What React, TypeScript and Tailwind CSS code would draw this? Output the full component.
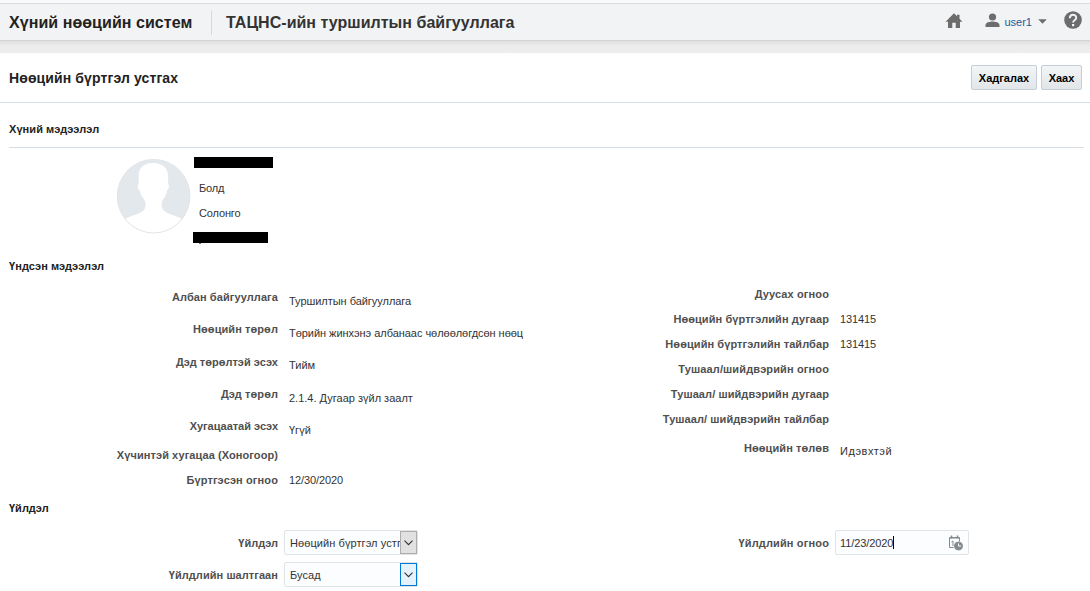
import React from 'react';

type Field = { label: string; value?: string; h: string; labelTrack?: string; valueTrack?: string; drop?: string };

const leftFields: Field[] = [
  { label: 'Албан байгууллага', value: 'Туршилтын байгууллага', h: 'h-8', drop: 'top-1', labelTrack: 'tracking-[0.09px]', valueTrack: 'tracking-[-0.04px]' },
  { label: 'Нөөцийн төрөл', value: 'Төрийн жинхэнэ албанаас чөлөөлөгдсөн нөөц', h: 'h-8', drop: 'top-1', valueTrack: 'tracking-[-0.04px]' },
  { label: 'Дэд төрөлтэй эсэх', value: 'Тийм', h: 'h-[33px]', drop: 'top-[3px]', labelTrack: 'tracking-[0.02px]' },
  { label: 'Дэд төрөл', value: '2.1.4. Дугаар зүйл заалт', h: 'h-8', drop: 'top-1' },
  { label: 'Хугацаатай эсэх', value: 'Үгүй', h: 'h-8', drop: 'top-1', labelTrack: 'tracking-[-0.02px]' },
  { label: 'Хүчинтэй хугацаа (Хоногоор)', h: 'h-[26px]' },
  { label: 'Бүртгэсэн огноо', value: '12/30/2020', h: 'h-6', labelTrack: 'tracking-[0.12px]', valueTrack: 'tracking-[-0.1px]' },
];

const rightFields: Field[] = [
  { label: 'Дуусах огноо', h: 'h-[25px]', labelTrack: 'tracking-[0.12px]' },
  { label: 'Нөөцийн бүртгэлийн дугаар', value: '131415', h: 'h-[25px]', valueTrack: 'tracking-[-0.12px]' },
  { label: 'Нөөцийн бүртгэлийн тайлбар', value: '131415', h: 'h-[25px]', valueTrack: 'tracking-[-0.12px]' },
  { label: 'Тушаал/шийдвэрийн огноо', h: 'h-[25px]', labelTrack: 'tracking-[0.13px]' },
  { label: 'Тушаал/ шийдвэрийн дугаар', h: 'h-[25px]' },
  { label: 'Тушаал/ шийдвэрийн тайлбар', h: 'h-[25px]' },
  { label: 'Нөөцийн төлөв', value: 'Идэвхтэй', h: 'h-[33px]', drop: 'top-[3px]', valueTrack: 'tracking-[0.5px]' },
];

function FieldRow({ f }: { f: Field }) {
  return (
    <div className={`flex items-center ${f.h}`}>
      <div className={`w-[269px] shrink-0 text-right font-bold text-[#4f4f4f] ${f.labelTrack ?? 'tracking-[0.08px]'}`}>{f.label}</div>
      <div className={`relative ml-[11px] text-[#333] ${f.drop ?? ''} ${f.valueTrack ?? ''}`}>{f.value}</div>
    </div>
  );
}

function SelectBox({ value, active }: { value: string; active?: boolean }) {
  return (
    <div className="ml-[6px] flex h-[25px] w-[134px] rounded-[2px] border border-[#dfe4e7] bg-[#fbfdff]">
      <div className="flex w-[115px] shrink-0 items-center overflow-hidden pl-[5px] tracking-[0.08px] text-[#333]">{value}</div>
      <div className={`flex h-[23px] w-[17px] items-center justify-center border ${active ? 'border-[#0078d7] bg-[#e5f1fb]' : 'border-[#adadad] bg-[#e1e1e1]'}`}>
        <svg width="9" height="6" viewBox="0 0 9 6" fill="none" stroke="#333" strokeWidth="1.1"><path d="M.5.7 4.5 4.7 8.5.7" /></svg>
      </div>
    </div>
  );
}

function Avatar() {
  return (
    <svg className="mt-px" width="75" height="75" viewBox="-0.6 0 75 75">
      <defs><clipPath id="portrait"><ellipse cx="37" cy="37.2" rx="36.3" ry="36.8" /></clipPath></defs>
      <ellipse cx="37" cy="37.2" rx="36.3" ry="36.8" fill="#e3e8ed" />
      <g clipPath="url(#portrait)">
        <path fill="#fff" d="M36.500 4C27 4 22 9 22 17.500V25c-1.500 1-.8 5.500 1 6.500.8 4 2.500 6.500 4.200 8.500 2 3 2.500 6 .8 10-3 5-11.500 5.500-19.500 10L2 76h70l-6.500-16C57.500 55.500 49 55 46 50c-1.700-4-1.200-7 .8-10 1.700-2 3-4.500 3.700-8.500 1.800-1 2.500-5.500 1-6.500v-7.500C51.500 9 46 4 36.500 4Z" />
      </g>
      <ellipse cx="37" cy="37.2" rx="36.3" ry="36.8" fill="none" stroke="#e1e5e9" />
    </svg>
  );
}

export default function App() {
  return (
    <div className="h-[591px] w-[1090px] overflow-hidden bg-white font-['Liberation_Sans',Arial,sans-serif] text-[11px] leading-[14px] whitespace-nowrap text-[#333]">
      <div className="h-[3px] bg-[#fafafa]" />
      <header className="flex h-[38px] items-center border-y border-t-[#dcdcdc] border-b-[#d4d5d6] bg-[#f2f3f5] pl-[9px] text-[16px] leading-5 font-bold">
        <div className="w-[202px] pt-[2px] tracking-[0.06px] text-[#222]">Хүний нөөцийн систем</div>
        <div className="h-[25px] w-px bg-[#d3dbe1]" />
        <div className="ml-[14px] pt-[2px] tracking-[0.03px]">ТАЦНС-ийн туршилтын байгууллага</div>
        <div className="ml-auto flex h-full items-center text-[11px] font-normal text-[#145c9e]">
          <svg className="mr-[22px] mb-[3px]" width="18" height="16" viewBox="0 0 18 16" fill="#6c6c6c"><path d="m9 .3 3 3V1.800h2.500v4L17.500 8.800H15V15h-4.300V9.800H7.300V15H3V8.800H.5Z" /></svg>
          <svg className="mb-[3px]" width="15" height="15" viewBox="0 0 15 15" fill="#6c6c6c"><circle cx="7.500" cy="4" r="3.600" /><path d="M.5 14v-2c0-2.500 4.200-3.500 7-3.500s7 1 7 3.500v2Z" /></svg>
          <span className="ml-1">user1</span>
          <svg className="mb-[2px] ml-[6px]" width="9" height="5" viewBox="0 0 9 5" fill="#6c6c6c"><path d="M.2.3h8.600L4.500 4.800Z" /></svg>
          <svg className="mr-[8px] mb-[4px] ml-[17px]" width="18" height="18" viewBox="0 0 18 18"><circle cx="9" cy="9" r="8.800" fill="#6c6c6c" /><path d="M5.800 7.200C5.800 2.500 12.300 2.800 12.200 6.700c0 2.400-3.100 2.500-3.100 4.700" fill="none" stroke="#f2f3f5" strokeWidth="1.900" /><path d="M8 13h2.200v2.200H8z" fill="#f2f3f5" /></svg>
        </div>
      </header>
      <div className="h-3 bg-linear-to-b from-[#e0e0e0] via-[#ececec] via-40% to-[#eeeeee]" />
      <div className="flex h-[50px] items-center border-b border-[#d6dee4] pr-2 pl-[9px]">
        <h1 className="text-[14px] font-bold tracking-[0.12px] text-[#222]">Нөөцийн бүртгэл устгах</h1>
        <div className="ml-auto flex gap-1 font-bold text-black">
          <button className="h-[25px] w-[66px] rounded-[2px] border border-[#c4ced7] bg-linear-to-b from-[#f3f5f6] to-[#e2e6e9]">Хадгалах</button>
          <button className="h-[25px] w-[41px] rounded-[2px] border border-[#c4ced7] bg-linear-to-b from-[#f3f5f6] to-[#e2e6e9]">Хаах</button>
        </div>
      </div>
      <main className="pr-[6px] pl-[9px]">
        <div className="h-[45px] border-b border-[#d6dee4] pt-[19px]"><h2 className="font-bold tracking-[0.07px] text-[#222]">Хүний мэдээлэл</h2></div>
        <section className="flex h-[111px] pt-[10px] pl-[107px]">
          <Avatar />
          <div className="ml-px flex flex-col items-start tracking-[-0.15px]">
            <div className="-mt-px ml-[2px] h-[11px] w-[79px] bg-black" />
            <div className="mt-[13px] ml-[7px]">Болд</div>
            <div className="mt-[11px] ml-[7px]">Солонго</div>
            <div className="mt-[12px] ml-px h-[11px] w-[75px] bg-black" />
            <div className="ml-[7px] h-px w-[2px] bg-[#777]" />
          </div>
        </section>
        <h2 className="h-[22px] font-bold tracking-[0.07px] text-[#222]">Үндсэн мэдээлэл</h2>
        <section className="flex h-[220px]">
          <div className="w-[551px]">{leftFields.map((f) => <FieldRow key={f.label} f={f} />)}</div>
          <div>{rightFields.map((f) => <FieldRow key={f.label} f={f} />)}</div>
        </section>
        <h2 className="h-[29px] font-bold text-[#222]">Үйлдэл</h2>
        <section className="flex">
          <div className="flex w-[551px] flex-col gap-[7px]">
            <div className="flex items-center"><div className="w-[269px] text-right font-bold text-[#4f4f4f]">Үйлдэл</div><SelectBox value="Нөөцийн бүртгэл устгах" /></div>
            <div className="flex items-center"><div className="w-[269px] text-right font-bold tracking-[0.06px] text-[#4f4f4f]">Үйлдлийн шалтгаан</div><SelectBox value="Бусад" active /></div>
          </div>
          <div className="flex h-[25px] items-center">
            <div className="w-[269px] text-right font-bold tracking-[0.15px] text-[#4f4f4f]">Үйлдлийн огноо</div>
            <div className="ml-[6px] flex h-[25px] w-[134px] items-center rounded-[2px] border border-[#dfe4e7] bg-[#fbfdff] pl-1 text-[#333]">
              <span className="tracking-[-0.1px]">11/23/2020</span><span className="h-[13px] w-px bg-black" />
              <svg className="mr-[5px] ml-auto" width="15" height="16" viewBox="0 0 15 16" fill="none" stroke="#858b8f">
                <path d="M5.500 12.500h-4v-10h10v4M1.500 3h10" /><path d="M3.500.5v3M9.500.5v3" strokeWidth="1.500" /><path d="m3.500 7 1.500-1v5" /><circle cx="10.500" cy="11" r="4" fill="#858b8f" /><path d="M10.500 8.500V11h2.500" stroke="#fff" />
              </svg>
            </div>
          </div>
        </section>
      </main>
    </div>
  );
}
